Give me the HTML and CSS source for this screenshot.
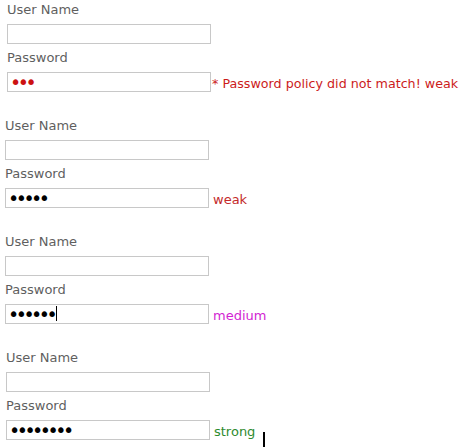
FILE: index.html
```html
<!DOCTYPE html>
<html lang="en">
<head>
    <meta charset="UTF-8">
    <title>Password strength</title>
    <link rel="stylesheet" href="styles.css">
</head>
<body>

    <form class="login login-1">
        <label class="label">User Name</label>
        <div class="row"><input class="field" type="text"></div>
        <label class="label">Password</label>
        <div class="row">
            <input class="field field-pass field-bad" type="password" value="abc">
            <span class="msg msg-bad">* Password policy did not match! weak</span>
        </div>
    </form>

    <form class="login login-2">
        <label class="label">User Name</label>
        <div class="row"><input class="field" type="text"></div>
        <label class="label">Password</label>
        <div class="row">
            <input class="field field-pass" type="password" value="abcde">
            <span class="msg msg-weak">weak</span>
        </div>
    </form>

    <form class="login login-3">
        <label class="label">User Name</label>
        <div class="row"><input class="field" type="text"></div>
        <label class="label">Password</label>
        <div class="row">
            <input class="field field-pass" type="password" value="abcdef">
            <span class="text-caret"></span>
            <span class="msg msg-medium">medium</span>
        </div>
    </form>

    <form class="login login-4">
        <label class="label">User Name</label>
        <div class="row"><input class="field" type="text"></div>
        <label class="label">Password</label>
        <div class="row">
            <input class="field field-pass" type="password" value="abcdefgh">
            <span class="msg msg-strong">strong</span>
            <span class="caret"></span>
        </div>
    </form>

</body>
</html>
```

FILE: styles.css
```css
*
{
    margin: 0;
    padding: 0;
    box-sizing: border-box;
}

body
{
    font-family: "DejaVu Sans", Verdana, sans-serif;
    font-size: 13px;
    background: #fff;
}

.login
{
    display: flex;
    flex-direction: column;
    align-items: flex-start;
    margin-bottom: 20px;
}

.login-1 { padding-left: 7px; }
.login-2 { padding-left: 5px; }
.login-3 { padding-left: 5px; }
.login-4 { padding-left: 6px; }

.label
{
    color: #5f5f5f;
    height: 22px;
    line-height: 20px;
}

.row
{
    display: flex;
    align-items: center;
    height: 20px;
    margin: 2px 0 4px;
    position: relative;
}

.field
{
    width: 204px;
    height: 20px;
    border: 1px solid #c8c8c8;
    padding: 0 2px;
    font-family: "DejaVu Sans", Verdana, sans-serif;
    font-size: 11px;
    color: #000;
    outline: none;
}

.field-pass
{
    font-size: 19px;
    letter-spacing: -3.5px;
}

.field-bad
{
    color: #cc1111;
}

.msg
{
    margin-left: 4px;
    margin-top: 2px;
}

.msg-bad { color: #cc1b1b; margin-left: 1px; font-size: 12.7px; }
.msg-weak { color: #c42a2a; }
.msg-medium { color: #d21fd2; }
.msg-strong { color: #2e8b2e; }

.text-caret
{
    position: absolute;
    left: 51px;
    top: 2px;
    width: 1px;
    height: 15px;
    background: #000;
}

.caret
{
    position: absolute;
    left: 257px;
    top: 12px;
    width: 2px;
    height: 15px;
    background: #000;
}
```
